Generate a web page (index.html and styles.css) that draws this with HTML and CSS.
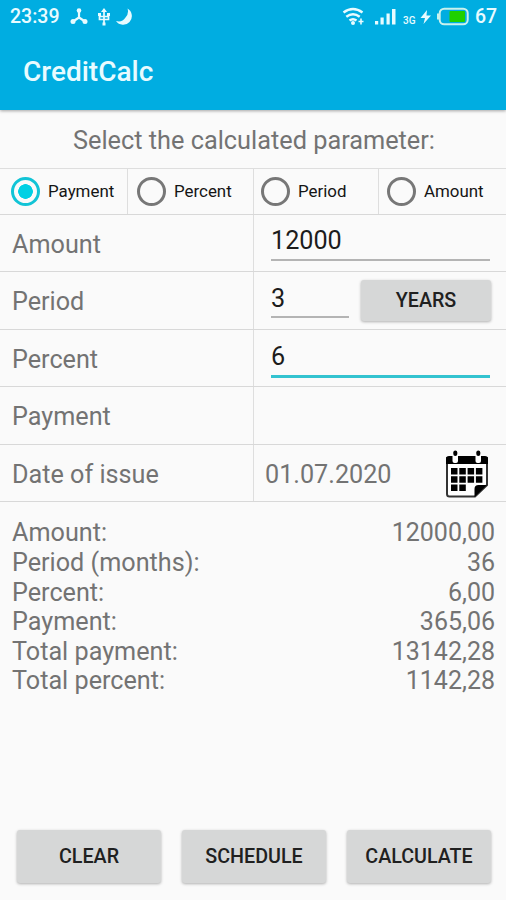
FILE: index.html
```html
<!DOCTYPE html>
<html lang="en">
<head>
    <meta charset="UTF-8">
    <meta name="viewport" content="width=device-width, initial-scale=1.0">
    <title>CreditCalc</title>
    <link rel="stylesheet" href="styles.css">
</head>
<body>
    <header class="header">
        <div class="status-bar">
            <span class="clock">23:39</span>
            <svg class="status-icons" width="66" height="20" viewBox="0 0 66 20">
                <g fill="#e8fbff" stroke="#e8fbff">
                    <path d="M9 4v7M9 10.500l-6 4M9 10.500l6 4" fill="none" stroke-width="2.200"/>
                    <circle cx="9" cy="3.500" r="2.300" stroke="none"/>
                    <circle cx="3" cy="14.500" r="2.500" stroke="none"/>
                    <circle cx="15" cy="14.500" r="2.500" stroke="none"/>
                </g>
                <path d="M34 2v16M29.500 6.500v6h9v-6M29 9.500h10" fill="none" stroke="#e8fbff" stroke-width="1.700"/>
                <path d="M34 1l3 4h-6zM28 6h3v3h-3zM37 6h3v3h-3zM32.500 15.500h3v3h-3z" fill="#e8fbff"/>
                <path d="M57.500 1.500A8.700 8.700 0 1 1 46 14 8.500 8.500 0 0 0 55.500 10.500 9 9 0 0 0 57.500 1.500z" fill="#e8fbff"/>
            </svg>
            <svg class="status-icons status-right" width="54" height="20" viewBox="0 0 54 20">
                <g fill="none" stroke="#e8fbff" stroke-width="2.400">
                    <path d="M1.500 5.500q9.500-7 19 0M4.300 9.800q6.700-5.200 13.400 0M7.500 13.500q3.500-2.600 7 0"/>
                </g>
                <circle cx="11" cy="16" r="2" fill="#e8fbff"/>
                <path d="M19 11.500v6M16.500 14.500h5" stroke="#e8fbff" stroke-width="1.600"/>
                <path d="M33 14h3.200v3.500H33zM38.500 10.500h3.200v7h-3.200zM44.500 6.500h3.200v11h-3.200zM50 2h3.500v15.500H50z" fill="#e8fbff"/>
            </svg>
            <span class="network">3G</span>
            <svg class="status-icons" width="12" height="14" viewBox="0 0 12 14">
                <path d="M7 0L0.500 8h4.500L3.500 14 11 5.500H6.500z" fill="#e8fbff"/>
            </svg>
            <svg class="status-icons battery" width="34" height="20" viewBox="0 0 34 20">
                <rect x="2.700" y="1.700" width="28" height="15.600" rx="4.500" fill="none" stroke="#c9f1ed" stroke-width="2"/>
                <path d="M2 6.500v6H0v-6z" fill="#c9f1ed"/>
                <rect x="12.500" y="4" width="15.500" height="11" rx="1" fill="#1fd000"/>
            </svg>
            <span class="charge">67</span>
        </div>
        <h1 class="title">CreditCalc</h1>
    </header>

    <p class="prompt">Select the calculated parameter:</p>

    <div class="radio-group">
        <label class="radio-item"><input type="radio" name="parameter" checked>Payment</label>
        <label class="radio-item"><input type="radio" name="parameter">Percent</label>
        <label class="radio-item"><input type="radio" name="parameter">Period</label>
        <label class="radio-item"><input type="radio" name="parameter">Amount</label>
    </div>

    <div class="form">
        <div class="row">
            <label class="label" for="amount">Amount</label>
            <div class="value"><input class="field" type="text" id="amount" value="12000"></div>
        </div>
        <div class="row">
            <label class="label" for="period">Period</label>
            <div class="value">
                <input class="field short" type="text" id="period" value="3">
                <button class="btn btn-years">YEARS</button>
            </div>
        </div>
        <div class="row">
            <label class="label" for="percent">Percent</label>
            <div class="value"><input class="field active" type="text" id="percent" value="6"></div>
        </div>
        <div class="row">
            <span class="label">Payment</span>
            <div class="value"></div>
        </div>
        <div class="row">
            <span class="label">Date of issue</span>
            <div class="value date">
                <span>01.07.2020</span>
                <svg width="44" height="50" viewBox="0 0 44 50">
                    <path d="M2 8v36q0 2.500 2.500 2.500H30L42 35V8z" fill="#fff" stroke="#333" stroke-width="2"/>
                    <path d="M1 14V9q0-3 3-3h36q3 0 3 3v5z" fill="#000"/>
                    <path d="M29.500 47V39q0-4 4-4H42z" fill="#000"/>
                    <g fill="#fff">
                        <rect x="7.500" y="4" width="5.500" height="9" rx="2"/>
                        <rect x="30.500" y="4" width="5.500" height="9" rx="2"/>
                    </g>
                    <g fill="#000">
                        <rect x="8.300" y="0.500" width="4" height="5.500" rx="2"/>
                        <rect x="31.300" y="0.500" width="4" height="5.500" rx="2"/>
                        <path d="M6 18h6.500v6.500H6zM14.300 18h6.500v6.500h-6.500zM22.600 18h6.500v6.500h-6.500zM30.900 18h6.500v6.500h-6.500z"/>
                        <path d="M6 26.300h6.500v6.500H6zM14.300 26.300h6.500v6.500h-6.500zM22.600 26.300h6.500v6.500h-6.500zM30.900 26.300h6.500v6.500h-6.500z"/>
                        <path d="M6 34.600h6.500v6.500H6zM14.300 34.600h6.500v6.500h-6.500z"/>
                    </g>
                </svg>
            </div>
        </div>
    </div>

    <div class="results">
        <div class="result"><span>Amount:</span><span>12000,00</span></div>
        <div class="result"><span>Period (months):</span><span>36</span></div>
        <div class="result"><span>Percent:</span><span>6,00</span></div>
        <div class="result"><span>Payment:</span><span>365,06</span></div>
        <div class="result"><span>Total payment:</span><span>13142,28</span></div>
        <div class="result"><span>Total percent:</span><span>1142,28</span></div>
    </div>

    <div class="actions">
        <button class="btn">CLEAR</button>
        <button class="btn">SCHEDULE</button>
        <button class="btn">CALCULATE</button>
    </div>
</body>
</html>
```
FILE: styles.css
```css
* {
    box-sizing: border-box;
}

body {
    display: flex;
    flex-direction: column;
    height: 900px;
    margin: 0;
    font-family: Roboto, sans-serif;
    font-size: 25.2px;
    background-color: #fafafa;
    color: #737373;
    overflow: hidden;
}

.header {
    height: 110px;
    flex-shrink: 0;
    background-color: #00ade1;
    color: #e8fbff;
    box-shadow: 0 1px 3px rgba(0,0,0,0.35);
}

.status-bar {
    display: flex;
    align-items: center;
    height: 33px;
    padding: 0 9px 0 10px;
    font-size: 19.5px;
    font-weight: 500;
}

.clock {
    width: 50px;
    margin-right: 10px;
}

.status-icons {
    flex-shrink: 0;
}

.status-right {
    margin-left: auto;
}

.network {
    width: 13px;
    margin: 8px 4px 0 7px;
    font-size: 10px;
}

.battery {
    margin: 0 4px 0 5px;
}

.charge {
    width: 22px;
}

.title {
    margin: 0;
    padding-left: 23px;
    font-size: 28px;
    font-weight: 500;
    line-height: 78px;
}

.prompt {
    height: 57.5px;
    flex-shrink: 0;
    margin: 0;
    padding-left: 2px;
    font-size: 25.3px;
    line-height: 61px;
    text-align: center;
}

.radio-group {
    display: grid;
    grid-template-columns: 128px 126px 125px 127px;
    height: 47px;
    flex-shrink: 0;
    border-top: 1px solid #dedede;
    border-bottom: 1px solid #d8d8d8;
}

.radio-item {
    display: flex;
    align-items: center;
    padding-left: 9px;
    border-right: 1px solid #dedede;
    font-size: 16.9px;
    color: #151515;
}

.radio-item:first-child {
    padding-left: 11px;
}

.radio-item:nth-child(3) {
    padding-left: 7px;
}

.radio-item:last-child {
    padding-left: 8px;
    border-right: none;
}

.radio-item input {
    appearance: none;
    width: 29px;
    height: 29px;
    margin: 0 8px 0 0;
    border: 3px solid #777;
    border-radius: 50%;
}

.radio-item input:checked {
    border-color: #12c4d6;
    background: radial-gradient(circle, #00d0e4 7px, transparent 7.6px);
}

.row {
    display: grid;
    grid-template-columns: 254px 1fr;
    height: 57.6px;
    border-bottom: 1px solid #d8d8d8;
}

.label {
    padding: 3px 0 0 12px;
    border-right: 1px solid #dedede;
    line-height: 53.6px;
}

.value {
    display: flex;
    align-items: flex-start;
    padding: 6px 15px 0 17px;
}

.field {
    width: 219px;
    height: 40px;
    padding: 2px 0 0;
    border: none;
    border-bottom: 2px solid #b4b4b4;
    background: none;
    font: inherit;
    color: #1c1c1c;
    outline: none;
}

.field.short {
    width: 78px;
    margin-right: 12px;
}

.field.active {
    height: 42px;
    border-bottom: 3px solid #33c3d0;
}

.date {
    align-items: center;
    justify-content: space-between;
    padding: 3px 17px 0 11px;
}

.results {
    padding: 16px 11px 0 12px;
}

.result {
    display: flex;
    justify-content: space-between;
    line-height: 29.6px;
}

.result span:last-child {
    font-size: 25px;
}

.btn {
    flex: 1;
    height: 53px;
    padding: 0;
    border: none;
    border-radius: 3px;
    background-color: #d6d7d7;
    box-shadow: 0 1px 3px rgba(0,0,0,0.3);
    font-family: inherit;
    font-size: 19.7px;
    font-weight: 500;
    color: #202020;
}

.btn-years {
    height: 41px;
    margin-top: 2px;
}

.actions {
    display: flex;
    gap: 21px;
    margin-top: auto;
    padding: 0 15px 17px 17px;
}
```
